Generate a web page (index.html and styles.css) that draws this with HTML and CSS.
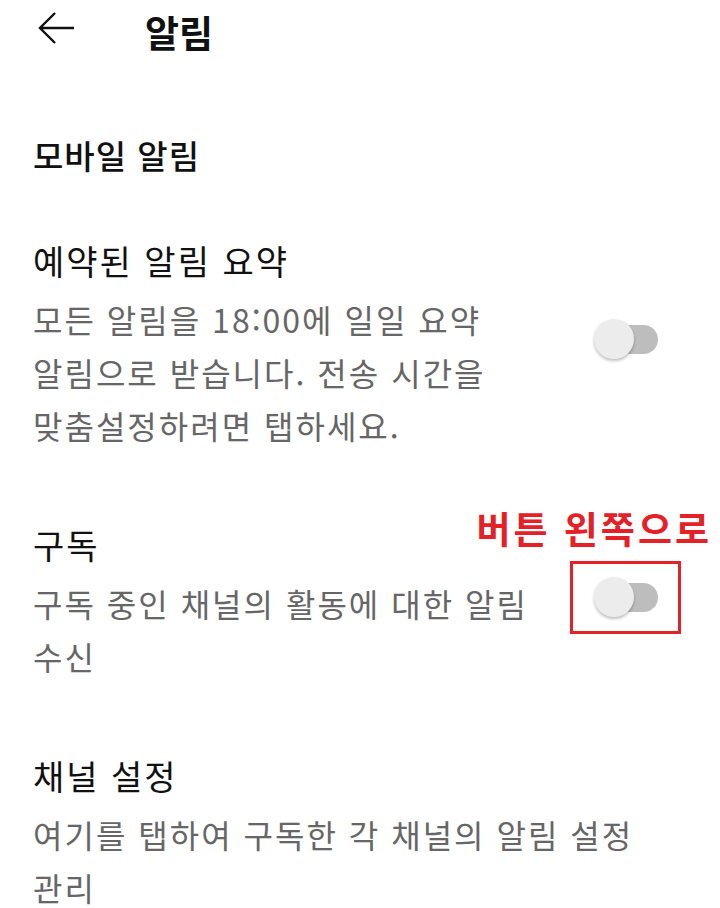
FILE: index.html
```html
<!DOCTYPE html>
<html lang="ko">
<head>
    <meta charset="UTF-8">
    <meta name="viewport" content="width=device-width, initial-scale=1.0">
    <title>알림</title>
    <link rel="stylesheet" href="styles.css">
</head>
<body>
    <header class="app-bar">
        <svg class="back-icon" width="40" height="34" viewBox="0 0 40 34">
            <path d="M18 2 L3 17 L18 32 M3 17 H37" fill="none" stroke="#111" stroke-width="2.4"/>
        </svg>
        <h1 class="app-title">알림</h1>
    </header>

    <main class="settings">
        <h2 class="group-title">모바일 알림</h2>

        <div class="setting-row first">
            <div class="setting-text">
                <div class="setting-name">예약된 알림 요약</div>
                <div class="setting-desc">모든 알림을 18:00에 일일 요약<br>알림으로 받습니다. 전송 시간을<br>맞춤설정하려면 탭하세요.</div>
            </div>
            <div class="switch-cell">
                <span class="switch"><span class="switch-thumb"></span></span>
            </div>
        </div>

        <div class="setting-row">
            <div class="setting-text">
                <div class="setting-name">구독</div>
                <div class="setting-desc">구독 중인 채널의 활동에 대한 알림<br>수신</div>
            </div>
            <div class="switch-cell marked">
                <span class="note">버튼 왼쪽으로</span>
                <span class="switch"><span class="switch-thumb"></span></span>
            </div>
        </div>

        <div class="setting-row">
            <div class="setting-text">
                <div class="setting-name">채널 설정</div>
                <div class="setting-desc">여기를 탭하여 구독한 각 채널의 알림 설정<br>관리</div>
            </div>
        </div>
    </main>
</body>
</html>
```

FILE: styles.css
```css
body {
    margin: 0;
    background: #ffffff;
    color: #111111;
    font-family: "Noto Sans CJK KR", "Noto Sans", sans-serif;
    overflow: hidden;
}

.app-bar {
    display: flex;
    align-items: center;
    height: 64px;
    padding-left: 37px;
    gap: 68px;
}

.back-icon {
    display: block;
    margin-top: -8px;
}

.app-title {
    margin: 0;
    font-size: 37px;
    font-weight: 700;
    line-height: 1;
}

.settings {
    padding: 0 39px 0 33px;
}

.group-title {
    margin: 69px 0 0;
    font-size: 33px;
    font-weight: 500;
    line-height: 44px;
    letter-spacing: 1px;
}

.setting-row {
    display: flex;
    align-items: center;
    margin-top: 69px;
}

.setting-row.first {
    margin-top: 60px;
}

.setting-text {
    flex: 1;
    white-space: nowrap;
}

.setting-name {
    font-size: 34px;
    line-height: 48px;
    letter-spacing: 2px;
}

.setting-desc {
    margin-top: 8px;
    font-size: 32px;
    line-height: 53px;
    color: #666666;
    letter-spacing: 2px;
}

/* toggle column, same box for the plain and the outlined one */
.switch-cell {
    position: relative;
    box-sizing: border-box;
    display: flex;
    align-items: center;
    justify-content: center;
    width: 111px;
    height: 73px;
    border: 3px solid transparent;
    margin-bottom: 10px;
}

.switch-cell.marked {
    border-color: #e42127;
}

.note {
    position: absolute;
    right: -34px;
    bottom: calc(100% + 17px);
    font-size: 37px;
    font-weight: 700;
    line-height: 37px;
    color: #e42127;
    white-space: nowrap;
    letter-spacing: 3px;
}

.switch {
    position: relative;
    display: block;
    width: 58px;
    height: 29px;
    margin-left: 6px;
    border-radius: 15px;
    background: #bdbdbd;
}

.switch-thumb {
    position: absolute;
    left: -6px;
    top: -6px;
    width: 40px;
    height: 40px;
    border-radius: 50%;
    background: #ececec;
    box-shadow: 0 2px 3px rgba(0, 0, 0, 0.25);
}
```
